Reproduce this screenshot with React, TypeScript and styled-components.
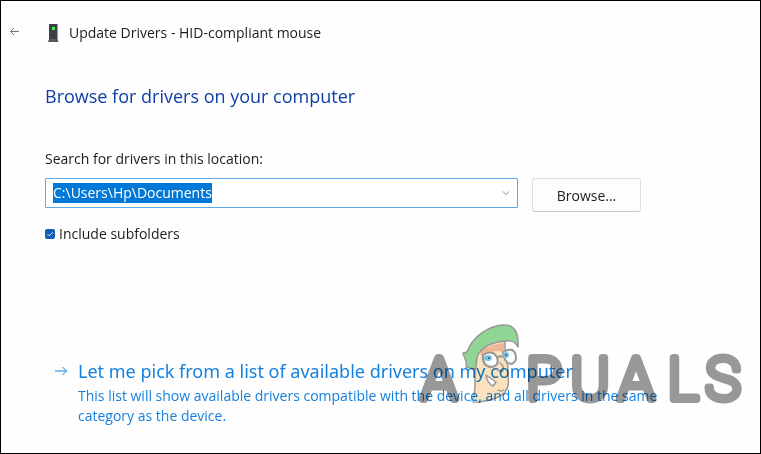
import React, { useEffect, useRef } from "react";
import styled, { createGlobalStyle } from "styled-components";

const GlobalStyle = createGlobalStyle`
  * { box-sizing: border-box; }
  body {
    margin: 0;
    background: #fff;
    color: #1c1c1c;
    font: 14px/20px "Open Sans", "Noto Sans", sans-serif;
  }
`;

const Window = styled.main`
  position: relative;
  min-height: 100vh;
  padding: 20px 22px 24px 8px;
  border: 1px solid #000;
  background: #fefefe;
`;

const TitleBar = styled.header`
  display: flex;
  align-items: center;
  height: 24px;
`;

const BackButton = styled.button`
  display: flex;
  width: 12px;
  padding: 0;
  border: 0;
  background: none;
  color: #777;
`;

const DeviceIcon = styled.svg`
  margin: 0 10px 0 26px;
`;

const Title = styled.h1`
  margin: 0;
  font-size: 14px;
  font-weight: 400;
`;

const Body = styled.section`
  padding-left: 36px;
`;

const Heading = styled.h2`
  margin: 37px 0 0;
  color: #0f3fa6;
  font-size: 18px;
  line-height: 28px;
  font-weight: 400;
`;

const FieldLabel = styled.label`
  display: block;
  margin-top: 39px;
`;

const FieldRow = styled.div`
  display: flex;
  gap: 14px;
  margin-top: 9px;
`;

const Combo = styled.div`
  display: flex;
  align-items: center;
  flex: 0 1 473px;
  height: 30px;
  padding: 0 7px;
  border: 1px solid #5ca8e8;
  border-radius: 1px;
  background: #fff;
`;

const PathInput = styled.input`
  flex: 1;
  min-width: 0;
  height: 20px;
  padding: 0;
  border: 0;
  outline: 0;
  background: none;
  color: #1c1c1c;
  font: inherit;
  &::selection { background: #0078d7; color: #fff; }
`;

const DropButton = styled.button`
  display: flex;
  padding: 0;
  border: 0;
  background: none;
  color: #888;
`;

const BrowseButton = styled.button`
  flex: 0 0 109px;
  height: 34px;
  padding: 2px 0 0;
  border: 1px solid #dedede;
  border-bottom-color: #c8c8c8;
  border-radius: 3px;
  background: #fdfdfd;
  color: #1c1c1c;
  font: inherit;
`;

const CheckRow = styled.label`
  display: flex;
  align-items: center;
  gap: 4px;
  width: fit-content;
  margin-top: 12px;
`;

const CheckHolder = styled.span`
  display: grid;
`;

const CheckBox = styled.input`
  appearance: none;
  width: 10px;
  height: 10px;
  margin: 0;
  border-radius: 2px;
  background: #0f60b6;
  grid-area: 1 / 1;
`;

const CheckMark = styled.svg`
  grid-area: 1 / 1;
  pointer-events: none;
`;

const CommandLink = styled.a`
  display: grid;
  grid-template-columns: 14px 1fr;
  column-gap: 10px;
  margin: 112px 0 0 9px;
  color: #1480e0;
  text-decoration: none;
`;

const LinkArrow = styled.svg`
  margin-top: 9px;
`;

const LinkTitle = styled.span`
  display: block;
  font-family: "Noto Sans", sans-serif;
  font-size: 18px;
  line-height: 30px;
`;

const LinkText = styled.span`
  display: block;
  max-width: 600px;
  font-size: 14px;
  line-height: 20px;
`;

const Watermark = styled.svg`
  position: absolute;
  right: 16px;
  bottom: 47px;
  mix-blend-mode: multiply;
  pointer-events: none;
`;

const WatermarkText = styled.text`
  font: 100 58px Roboto, sans-serif;
  text-anchor: middle;
  fill: #999;
  stroke: #999;
  stroke-width: 8px;
  stroke-linejoin: round;
`;

function AppualsMark() {
  return (
    <Watermark width="324" height="82" viewBox="0 0 324 82" overflow="visible" aria-hidden="true">
      <WatermarkText x="19 124 170 216 263 303" y="75">APUALS</WatermarkText>
      <g stroke="#999" strokeWidth="1.5" strokeLinejoin="round" strokeLinecap="round">
        <path d="M51 27C60 22 75 16 85 17C84 27 88 38 88 46C88 54 90 63 85 68C80 74 70 76 60 78L53 78C56 66 55 54 55 44Z" fill="#fbe3bf" />
        <path d="M60 26Q73 20 84 19L84 28Q72 25 61 32Z" fill="#f2b795" stroke="none" />
        <path d="M43 29L47 28C52 14 67 2 83 1C95 0 99 10 98 23C95 17 91 16 85 17C74 18 64 22 59 29C55 33 58 41 55 45L46 43C48 38 44 34 43 29Z" fill="#91d694" />
        <path d="M53 72Q58 75 57 78L49 78Z" fill="#a8def1" stroke="none" />
        <path d="M80 39Q85 43 83 47Q80 48 78 46" fill="none" />
        <path d="M66 51L76 58L73 62Q67 59 66 51Z" fill="#fff" />
        <path d="M78 66Q81 68 84 66" fill="none" />
      </g>
      <g fill="#fff" stroke="#999" strokeWidth="2">
        <path d="M63 31Q72 25 77 33Q80 42 71 43Q62 42 63 31Z" />
        <path d="M83 28Q92 23 95 29Q98 38 91 40Q84 39 83 28Z" />
        <path d="M77 34Q80 31 83 33" fill="none" />
      </g>
      <g fill="#76c4e6">
        <ellipse cx="68" cy="34" rx="4" ry="3" />
        <ellipse cx="86" cy="31" rx="3" ry="3" />
      </g>
      <g fill="#555">
        <circle cx="69" cy="34" r="1" />
        <circle cx="86" cy="31" r="1" />
      </g>
    </Watermark>
  );
}

export default function App() {
  const path = useRef<HTMLInputElement>(null);
  useEffect(() => {
    path.current?.focus();
    path.current?.select();
  }, []);
  return (
    <Window>
      <GlobalStyle />
      <TitleBar>
        <BackButton aria-label="Back">
          <svg width="12" height="12" viewBox="0 0 12 12" fill="none" stroke="currentColor">
            <path d="M10 4.500H1.500M5 1 1.500 4.500 5 8" />
          </svg>
        </BackButton>
        <DeviceIcon width="12" height="20" viewBox="0 0 12 20">
          <path d="M2 1H10.500V16H2Z" fill="#3c4044" />
          <path d="M2 16H10.500L11.500 19H1Z" fill="#55595c" />
          <path d="M5 4H8V7H5Z" fill="#3df04b" />
        </DeviceIcon>
        <Title>Update Drivers - HID-compliant mouse</Title>
      </TitleBar>
      <Body>
        <Heading>Browse for drivers on your computer</Heading>
        <FieldLabel htmlFor="path">Search for drivers in this location:</FieldLabel>
        <FieldRow>
          <Combo>
            <PathInput id="path" ref={path} defaultValue="C:\Users\Hp\Documents" />
            <DropButton aria-label="Show locations">
              <svg width="8" height="8" viewBox="0 0 8 8" fill="none" stroke="currentColor">
                <path d="M1 2.500 4 5.500 7 2.500" />
              </svg>
            </DropButton>
          </Combo>
          <BrowseButton>Browse...</BrowseButton>
        </FieldRow>
        <CheckRow>
          <CheckHolder>
            <CheckBox type="checkbox" defaultChecked />
            <CheckMark width="10" height="10" viewBox="0 0 10 10" fill="none" stroke="#d6e8fa">
              <path d="M2.500 5 4.300 6.800 7.800 3.300" />
            </CheckMark>
          </CheckHolder>
          Include subfolders
        </CheckRow>
        <CommandLink href="#drivers">
          <LinkArrow width="14" height="12" viewBox="0 0 14 12" fill="none" stroke="currentColor">
            <path d="M1 6H12.500M8.500 2 12.500 6 8.500 10" />
          </LinkArrow>
          <span>
            <LinkTitle>Let me pick from a list of available drivers on my computer</LinkTitle>
            <LinkText>
              This list will show available drivers compatible with the device, and all drivers in the same
              category as the device.
            </LinkText>
          </span>
        </CommandLink>
      </Body>
      <AppualsMark />
    </Window>
  );
}
